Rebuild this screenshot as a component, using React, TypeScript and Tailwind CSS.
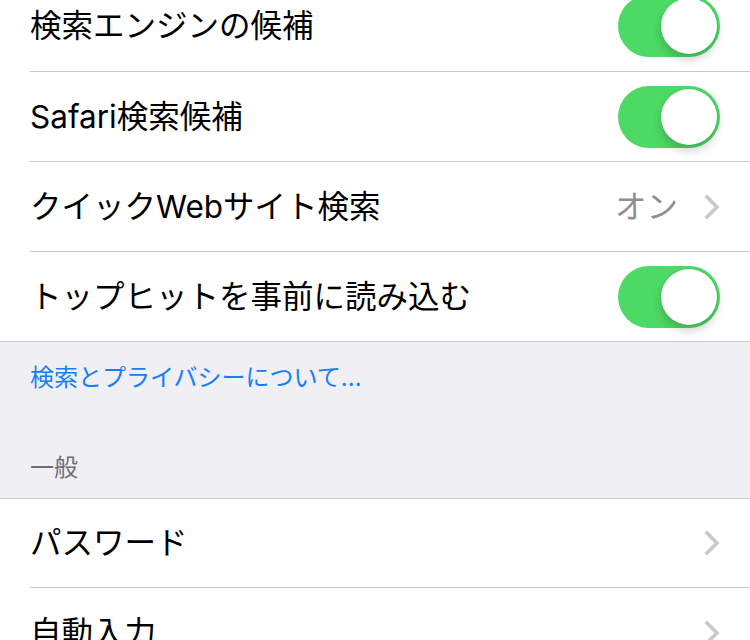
import React from 'react';

const font = { fontFamily: 'Inter, "Noto Sans CJK JP", sans-serif' };

const Toggle = () => (
  <div className="relative w-[102px] h-[62px] rounded-full bg-[#4cd964] shrink-0">
    <div className="absolute right-[3px] top-[3px] w-[56px] h-[56px] rounded-full bg-white shadow-[0_6px_10px_rgba(0,0,0,0.18),0_0_1px_rgba(0,0,0,0.2)]" />
  </div>
);

const Chevron = () => (
  <svg className="w-[16px] h-[26px] shrink-0" viewBox="0 0 16 26" fill="none" stroke="#c7c7cc" strokeWidth="3.5" strokeLinecap="square">
    <path d="M3 3l10 10L3 23" />
  </svg>
);

type RowProps = {
  label: string;
  right?: React.ReactNode;
  first?: boolean;
  h?: string;
};

// separator sits on top of every row but the first of a group
const Row: React.FC<RowProps> = ({ label, right, first, h = 'h-[90px]' }) => (
  <div className="pl-[30px] bg-white">
    <div className={`${h} flex items-center justify-between pr-[30px] ${first ? '' : 'border-t border-[#c8c7cc]'}`}>
      <span className="text-[31.5px] text-black leading-none">{label}</span>
      {right}
    </div>
  </div>
);

export default function App() {
  return (
    <div className="w-[750px] h-[640px] overflow-hidden bg-[#efeff4]" style={font}>
      <div className="-mt-[19px]">
        <Row label="検索エンジンの候補" right={<Toggle />} first />
        <Row label="Safari検索候補" right={<Toggle />} />
        <Row
          label="クイックWebサイト検索"
          right={
            <div className="flex items-center gap-[26px]">
              <span className="text-[31.5px] text-[#8e8e93] leading-none">オン</span>
              <Chevron />
            </div>
          }
        />
        <Row label="トップヒットを事前に読み込む" right={<Toggle />} />
        <div className="border-t border-[#c8c7cc]" />

        <div className="h-[156px] px-[30px] flex flex-col">
          <div className="pt-[22px] text-[24px] text-[#157efb] leading-[28px]">検索とプライバシーについて...</div>
          <div className="mt-auto pb-[16px] text-[24px] text-[#6d6d72] leading-[28px]">一般</div>
        </div>

        <div className="border-t border-[#c8c7cc]" />
        <Row label="パスワード" right={<Chevron />} first h="h-[88px]" />
        <Row label="自動入力" right={<Chevron />} />
      </div>
    </div>
  );
}
